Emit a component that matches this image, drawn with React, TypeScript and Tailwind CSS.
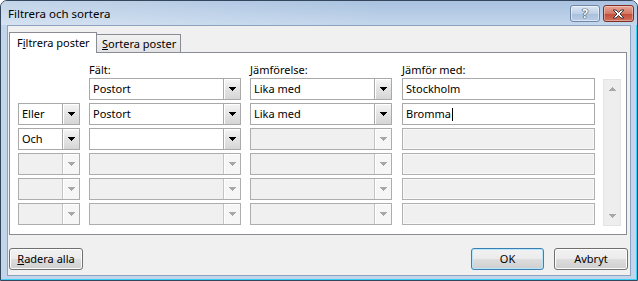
import React from "react";

const FONT = "font-['Noto_Sans','Liberation_Sans',sans-serif]";

function Arrow({ disabled }: { disabled?: boolean }) {
  return (
    <svg width="7" height="4" viewBox="0 0 7 4" className="block">
      <path
        d="M0 0h7v1h-1v1h-1v1h-1v1h-1v-1h-1v-1h-1v-1h-1z"
        fill={disabled ? "#a7a7a7" : "#000"}
      />
    </svg>
  );
}

function Combo({ value, disabled }: { value?: string; disabled?: boolean }) {
  return (
    <div
      className={
        disabled
          ? "h-[22px] w-full flex border border-[#adadad] bg-[#f0f0f0]"
          : "h-[22px] w-full flex border border-[#a9a9a9] bg-white"
      }
    >
      <div className="flex-1 pl-[3px] text-[11px] leading-[20px] text-black whitespace-nowrap overflow-hidden">
        {value}
      </div>
      <div
        className={
          disabled
            ? "w-[17px] h-full border-l border-[#c4c4c4] bg-[#f6f6f6] shadow-[inset_1px_1px_0_#ffffff] flex items-center justify-center"
            : "w-[17px] h-full border-l border-[#a9a9a9] bg-[linear-gradient(to_bottom,#f5f5f5,#e4e4e4_50%,#d6d6d6)] shadow-[inset_1px_1px_0_#ffffff] flex items-center justify-center"
        }
      >
        <Arrow disabled={disabled} />
      </div>
    </div>
  );
}

function TextField({ value, disabled, caret }: { value?: string; disabled?: boolean; caret?: boolean }) {
  return (
    <div
      className={
        disabled
          ? "h-[22px] w-full border border-[#b0b0b0] bg-[#f0f0f0] shadow-[inset_0_0_0_1px_#f8f8f8]"
          : "h-[22px] w-full border border-[#a9a9a9] bg-white"
      }
    >
      {value !== undefined && (
        <div className="pl-[3px] text-[11px] leading-[20px] text-black whitespace-nowrap flex items-center">
          <span>{value}</span>
          {caret && <span className="inline-block w-[1px] h-[13px] bg-black ml-[1px]" />}
        </div>
      )}
    </div>
  );
}

function Row({
  op,
  opDisabled,
  field,
  fieldDisabled,
  cmp,
  cmpDisabled,
  val,
  valDisabled,
  caret,
  noOp,
}: {
  op?: string;
  opDisabled?: boolean;
  field?: string;
  fieldDisabled?: boolean;
  cmp?: string;
  cmpDisabled?: boolean;
  val?: string;
  valDisabled?: boolean;
  caret?: boolean;
  noOp?: boolean;
}) {
  return (
    <div className="flex h-[22px]">
      <div className="w-[62px]">{noOp ? null : <Combo value={op} disabled={opDisabled} />}</div>
      <div className="w-[152px] ml-[9px]">
        <Combo value={field} disabled={fieldDisabled} />
      </div>
      <div className="w-[142px] ml-[9px]">
        <Combo value={cmp} disabled={cmpDisabled} />
      </div>
      <div className="w-[193px] ml-[10px]">
        <TextField value={val} disabled={valDisabled} caret={caret} />
      </div>
    </div>
  );
}

function Button({ children, def, w }: { children: React.ReactNode; def?: boolean; w: string }) {
  return (
    <div
      className={
        (def
          ? "border-[#3c7fb1] shadow-[inset_0_0_0_1px_#b5e6fb] "
          : "border-[#707070] shadow-[inset_0_0_0_1px_#fcfcfc] ") +
        w +
        " h-[22px] rounded-[3px] border bg-[linear-gradient(to_bottom,#f2f2f2_0%,#ebebeb_50%,#dddddd_51%,#cfcfcf_100%)] flex items-center justify-center text-[11px] text-black"
      }
    >
      {children}
    </div>
  );
}

export default function App() {
  return (
    <div className={"w-[638px] h-[281px] " + FONT}>
      <div className="w-full h-full flex flex-col border border-[#34465c] rounded-t-[7px] bg-[#c2d5eb] overflow-hidden shadow-[inset_-1px_-1px_0_#3ad0f5]">
        {/* Title bar */}
        <div className="h-[24px] flex items-start bg-[linear-gradient(to_right,rgba(255,255,255,0.3),rgba(255,255,255,0)_60%),linear-gradient(to_bottom,#a9c2e0,#c3d6ec)]">
          <div className="pl-[7px] pt-[5px] text-[11.5px] leading-[16px] text-black">Filtrera och sortera</div>
          <div className="ml-auto mt-[4px] mr-[3px] flex gap-[3px]">
            <div className="w-[30px] h-[17px] rounded-[3px] border border-[#6f86a6] bg-[linear-gradient(to_bottom,#dde7f4,#bccfe6_50%,#a8bfdc_51%,#b9cde6)] shadow-[inset_0_0_0_1px_rgba(255,255,255,0.5)] flex items-center justify-center">
              <span className="text-[12px] leading-[12px] font-bold text-white [text-shadow:0_0_1px_#333,0_0_1px_#333,0_0_1px_#333]">?</span>
            </div>
            <div className="w-[31px] h-[17px] rounded-[3px] border border-[#7e2e22] bg-[linear-gradient(to_bottom,#e8a597,#d47866_50%,#c24b37_51%,#d0705c)] shadow-[inset_0_0_0_1px_rgba(255,255,255,0.35)] flex items-center justify-center">
              <svg width="13" height="10" viewBox="0 0 13 10">
                <path
                  d="M1 1h3l2.5 2.5L9 1h3L8 5l4 4H9L6.5 6.5 4 9H1l4-4z"
                  fill="#fff"
                  stroke="#3a3a3a"
                  strokeWidth="1"
                  strokeLinejoin="round"
                />
              </svg>
            </div>
          </div>
        </div>

        {/* Client area */}
        <div className="flex-1 mx-[6px] mb-[4px] border border-[#8ca2be] bg-[#f0f0f0] flex flex-col pt-[6px]">
          {/* Tabs */}
          <div className="h-[21px] flex items-end pl-[1px] relative z-10">
            <div className="h-[21px] w-[88px] border border-b-0 border-[#898c95] bg-white text-[11px] leading-[18px] pl-[7px] pt-[1px] text-black">
              F<span className="underline">i</span>ltrera poster
            </div>
            <div className="h-[19px] w-[84px] border border-l-0 border-[#898c95] bg-[linear-gradient(to_bottom,#f2f2f2,#e3e3e3)] text-[11px] leading-[17px] pl-[5px] text-black">
              <span className="underline">S</span>ortera poster
            </div>
          </div>

          {/* Panel */}
          <div className="-mt-[1px] ml-[1px] mr-[3px] h-[183px] border border-[#898c95] bg-white pl-[8px] pt-[9px] flex flex-col">
            <div className="h-[16px] flex text-[11px] leading-[16px] text-black">
              <div className="w-[62px]" />
              <div className="w-[152px] ml-[9px]">Fält:</div>
              <div className="w-[142px] ml-[9px]">Jämförelse:</div>
              <div className="w-[193px] ml-[10px]">Jämför med:</div>
            </div>
            <div className="flex">
              <div className="flex flex-col gap-[3px]">
                <Row noOp field="Postort" cmp="Lika med" val="Stockholm" />
                <Row op="Eller" field="Postort" cmp="Lika med" val="Bromma" caret />
                <Row op="Och" field="" cmpDisabled valDisabled />
                <Row opDisabled fieldDisabled cmpDisabled valDisabled />
                <Row opDisabled fieldDisabled cmpDisabled valDisabled />
                <Row opDisabled fieldDisabled cmpDisabled valDisabled />
              </div>
              <div className="ml-[8px] mt-[1px] w-[18px] h-[147px] bg-[#eeeeee] border border-[#e4e4e4] flex flex-col items-center justify-between py-[7px]">
                <svg width="7" height="4" viewBox="0 0 7 4" className="block">
                  <path d="M3 0h1v1h1v1h1v1h1v1h-7v-1h1v-1h1v-1h1z" fill="#a7a7a7" />
                </svg>
                <Arrow disabled />
              </div>
            </div>
          </div>

          {/* Buttons */}
          <div className="mt-[13px] pl-[1px] pr-[2px] flex justify-between">
            <Button w="w-[74px]">
              <span className="underline">R</span>adera alla
            </Button>
            <div className="flex gap-[10px]">
              <Button w="w-[73px]" def>
                OK
              </Button>
              <Button w="w-[74px]">Avbryt</Button>
            </div>
          </div>
        </div>
      </div>
    </div>
  );
}
